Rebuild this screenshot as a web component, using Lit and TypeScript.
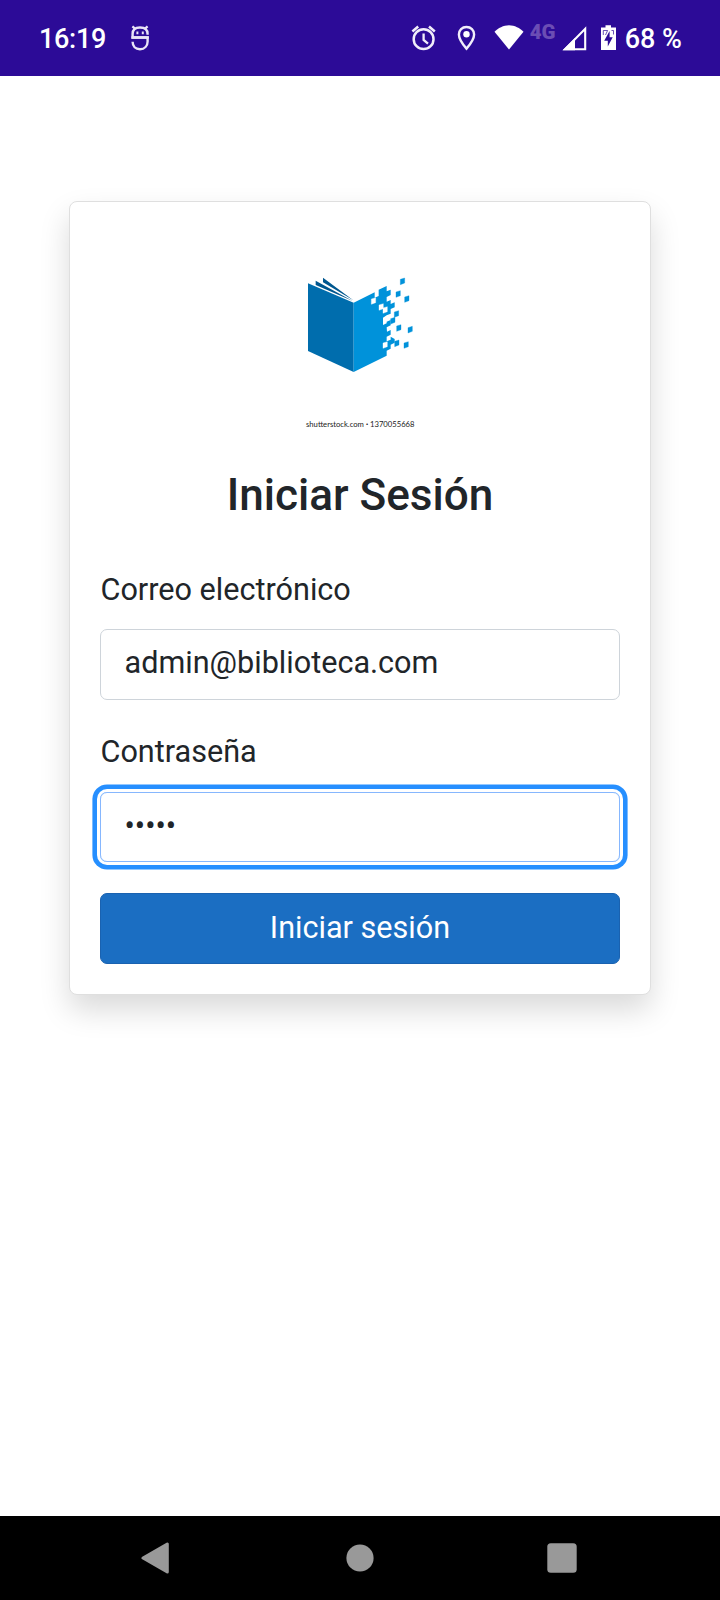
import { LitElement, html, css, svg } from "lit";
import { customElement } from "lit/decorators.js";

@customElement("status-bar")
class StatusBar extends LitElement {
  static styles = css`
    :host { display: flex; align-items: center; justify-content: space-between; height: 76px; box-sizing: border-box;
      padding: 0 38px 0 39px; background: #2c0b97; color: #fff; font: 500 27px/26px Roboto, sans-serif; }
    .side { display: flex; align-items: center; height: 26px; white-space: nowrap; }
    .side > span:not(.net) { padding-top: 2px; }
    .time { letter-spacing: -0.3px; }
    svg { display: block; height: 26px; flex: none; }
    .face { margin-left: 24px; }
    .pin { margin-left: 20.5px; }
    .wifi { margin-left: 18px; }
    .net { margin-left: 5.5px; width: 26px; font: 900 20.5px/14px Roboto, sans-serif; color: #6b4db4; align-self: flex-start; }
    .signal { margin-left: 6px; }
    .battery { margin-left: 14.5px; }
    .pct { margin-left: 8.5px; }
  `;
  render() {
    return html`
      <div class="side">
        <span class="time">16:19</span>
        <svg class="face" width="20" viewBox="130 25 20 26" fill="none" stroke="#e9e4f7" stroke-width="2.400">
          <path d="M147.600 34.800V34C147.600 29.800 144.700 27.500 140 27.500S132.600 29.800 132.600 34V37.500H147.600V41.400C147.600 46 144.500 49.200 140 49.200S132.600 46 132.600 41.800"/>
          <path d="M131.400 37.500H148.800" stroke-width="2.600"/>
          <path d="M132.400 26.400L135.600 29.200M147.600 26.400L144.400 29.200" stroke-width="2.200"/>
          <path d="M137.400 31.400V34.200M142.800 31.400V34.200" stroke-width="2"/>
        </svg>
      </div>
      <div class="side">
        <svg width="26" viewBox="411 25 26 26" fill="none" stroke="#f1eefa" stroke-width="2.500">
          <circle cx="423.600" cy="39.200" r="9.900"/>
          <path d="M423.600 33.400V40L428 43.600" stroke-width="2.300"/>
          <path d="M412.400 31.400L418.200 26.600M434.800 31.400L429 26.600" stroke-width="2.600"/>
        </svg>
        <svg class="pin" width="19" viewBox="457.500 25 19 26">
          <path d="M467 27C462.600 27 459.400 30.200 459.400 34.400C459.400 39.800 467 48.600 467 48.600S474.600 39.800 474.600 34.400C474.600 30.200 471.400 27 467 27Z" fill="none" stroke="#f1eefa" stroke-width="2.400"/>
          <circle cx="467" cy="34.300" r="3.200" fill="#fff"/>
        </svg>
        <svg class="wifi" width="30" viewBox="494.500 25 30 26">
          <path d="M495 31.800C498.500 28 504 25.200 509.500 25.200S520.500 28 524 31.800L509.500 49.600Z" fill="#fff"/>
        </svg>
        <span class="net">4G</span>
        <svg class="signal" width="25" viewBox="562.500 25 25 26">
          <path d="M565.600 49.200L585.700 28.800V49.200Z" fill="none" stroke="#fff" stroke-width="2.100"/>
          <path d="M563 50.300L575.500 38V50.300Z" fill="#fff"/>
        </svg>
        <svg class="battery" width="15" viewBox="602 25 15 26">
          <path d="M606.500 25.200H612V27.400H617V50H602V27.400H606.500Z" fill="#fff"/>
          <path d="M610.600 31L605.200 40.800H608.800V46.400L613.700 37.300H610.600Z" fill="#2c0b97"/>
          <path d="M604.300 35V30.500H608.600L606.500 35M612.500 30.500H614.500V34.500" fill="none" stroke="#2c0b97" stroke-width=".7"/>
        </svg>
        <span class="pct">68 %</span>
      </div>`;
  }
}

// Left edge and upper-left height of each loose cell floating off the cover.
const CELLS = [[331, 43], [318, 81], [344, 96], [313, 141], [302, 161], [320, 183], [354, 188], [314, 229], [342, 234]];
const HOLES = [[244, 102], [267, 120], [279, 129], [279, 234]];
const cell = (x: number, y: number, fill: string) =>
  svg`<path d=${`M${x} ${y}l13 -4v15l-13 5z`} fill=${fill} stroke=${fill}></path>`;

@customElement("book-logo")
class BookLogo extends LitElement {
  static styles = css`
    :host { display: block; width: 140px; height: 180px; }
    svg { display: block; }
    .credit { font: 400 8.3px Lato, sans-serif; fill: #222; }
    .dot { font-weight: 900; }
  `;
  render() {
    return html`
      <svg width="140" height="180" viewBox="0 0 140 180">
        <g transform="scale(.33333)">
          <path d="M99 38V52L190 106Z M77 47V60L188 108Z" fill="#00578f"/>
          <path d="M54 55L191 113V321L54 258Z" fill="#006dad"/>
          <path d="M191 113L254 82V98L266 93V74L290 63V79L302 74V90L290 96V110L302 105V117L314 112V127L302 132V146L290 151L279 158V180L290 175V170L302 165V181L290 187L291 200L302 195V209L290 215V229L302 224V215L314 222V233L302 239V251L290 257V272L191 321Z" fill="#0092da"/>
          ${HOLES.map(([x, y]) => cell(x, y, "#fff"))}
          ${CELLS.map(([x, y]) => cell(x, y, "#0092da"))}
        </g>
        <text class="credit" x="16" y="162.300" textLength="108.500" lengthAdjust="spacingAndGlyphs">shutterstock.com <tspan class="dot">·</tspan> 1370055668</text>
      </svg>`;
  }
}

@customElement("nav-bar")
class NavBar extends LitElement {
  static styles = css`
    :host { display: grid; grid-template-columns: 1fr 28px 1fr; align-items: center; height: 84px; box-sizing: border-box;
      padding: 0 143px 0 141px; background: #000; }
    svg { display: block; }
    .home { margin-left: 1px; }
    .recent { justify-self: end; }
  `;
  render() {
    return html`
      <svg width="28" height="32" viewBox="0 0 28 32"><path d="M2 16L26.300 2V30Z" fill="#999" stroke="#999" stroke-width="3" stroke-linejoin="round"/></svg>
      <svg class="home" width="28" height="28" viewBox="0 0 28 28"><circle cx="14" cy="14" r="13.600" fill="#999"/></svg>
      <svg class="recent" width="30" height="30" viewBox="0 0 30 30"><rect x=".3" y=".3" width="29.400" height="29.400" rx="3.500" fill="#999"/></svg>`;
  }
}

@customElement("app-root")
class AppRoot extends LitElement {
  static styles = css`
    :host { display: flex; flex-direction: column; height: 1600px; background: #fff; color: #212529;
      font: 400 30.6px/45px Roboto, sans-serif; }
    main { flex: 1; padding: 125px 69px 0; }
    .card { box-sizing: border-box; height: 794px; padding: 30px; border: 1px solid #dfdfdf; border-radius: 8px; background: #fff;
      box-shadow: 0 15px 30px rgba(0, 0, 0, .15); display: flex; flex-direction: column; }
    book-logo { margin: 33px auto 0; }
    h1 { margin: 23px 0 0; font-size: 44.1px; font-weight: 500; line-height: 54px; text-align: center; }
    .label { margin-top: 45px; padding-left: 0.5px; }
    .label.second { margin-top: 29px; }
    .field { box-sizing: border-box; height: 71px; margin-top: 17px; padding: 10px 23.5px; border: 1px solid #ced4da; border-radius: 7px; }
    .label.second + .field { margin-top: 18px; height: 70px; }
    .field.focused { border-color: #86b7fe; box-shadow: 0 0 0 3px #fff, 0 0 0 7.6px #268fff; }
    .submit { box-sizing: border-box; height: 71px; margin-top: 31px; padding: 10px 11px 13px; border: 1px solid #1a62b0; border-radius: 7px;
      background: #1b6ec2; color: #fff; font: inherit; line-height: 45px; }
  `;
  render() {
    return html`
      <status-bar></status-bar>
      <main>
        <div class="card">
          <book-logo></book-logo>
          <h1>Iniciar Sesión</h1>
          <div class="label">Correo electrónico</div>
          <div class="field">admin@biblioteca.com</div>
          <div class="label second">Contraseña</div>
          <div class="field focused">•••••</div>
          <button class="submit">Iniciar sesión</button>
        </div>
      </main>
      <nav-bar></nav-bar>`;
  }
}
